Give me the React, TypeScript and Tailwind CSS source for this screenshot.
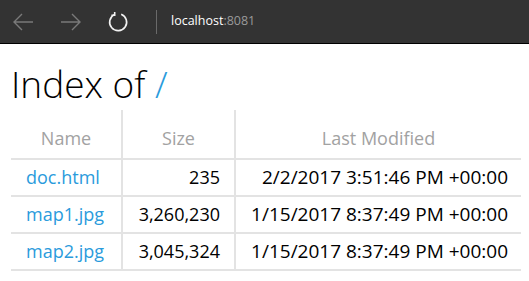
type Entry = { name: string; size: string; modified: string };

const entries: Entry[] = [
  { name: "doc.html", size: "235", modified: "2/2/2017 3:51:46 PM +00:00" },
  { name: "map1.jpg", size: "3,260,230", modified: "1/15/2017 8:37:49 PM +00:00" },
  { name: "map2.jpg", size: "3,045,324", modified: "1/15/2017 8:37:49 PM +00:00" },
];

const Arrow = ({ flip }: { flip?: boolean }) => (
  <svg width="22" height="18" viewBox="0 0 22 18" className={flip ? "-scale-x-100" : ""}>
    <path d="M21 9H2M10 1 2 9l8 8" fill="none" stroke="#7a7a7a" strokeWidth="1.4" />
  </svg>
);

export default function App() {
  return (
    <div className="min-h-screen bg-white font-['Open_Sans',sans-serif]">
      {/* browser chrome */}
      <div className="flex h-[44px] items-center border-b border-black bg-[#333333]">
        <div className="ml-[12px]"><Arrow /></div>
        <div className="ml-[26px]"><Arrow flip /></div>
        <svg width="22" height="22" viewBox="0 0 22 22" className="ml-[25px]">
          <path d="M7.2 3.6A8.5 8.5 0 1 0 14.2 3.2" fill="none" stroke="#f2f2f2" strokeWidth="1.6" />
          <path d="M7.7 1v3.3H4.4" fill="none" stroke="#f2f2f2" strokeWidth="1.6" />
        </svg>
        <div className="ml-[27px] h-[24px] w-px bg-[#6a6a6a]" />
        <div className="ml-[14px] text-[12.5px] text-white">
          localhost<span className="text-[#9a9a9a]">:8081</span>
        </div>
      </div>

      <div className="px-[11px]">
        <h1 className="mt-[17px] text-[37px] leading-[46px] font-light text-black">
          Index of <a className="text-[#2a9bdc]">/</a>
        </h1>
        <table className="mt-[3px] w-[510px] border-collapse text-[18px]">
          <thead>
            <tr className="h-[49px] border-b-2 border-[#e3e3e3] text-[#a2a2a2]">
              <th className="w-[111px] border-r-2 border-[#e3e3e3] pb-[6px] align-bottom font-normal">Name</th>
              <th className="w-[113px] border-r-2 border-[#e3e3e3] pb-[6px] align-bottom font-normal">Size</th>
              <th className="pb-[6px] align-bottom font-normal">Last Modified</th>
            </tr>
          </thead>
          <tbody>
            {entries.map((e) => (
              <tr key={e.name} className="h-[37px] border-b-2 border-[#e3e3e3]">
                <td className="border-r-2 border-[#e3e3e3] pl-[15px] text-[#2a9bdc]">{e.name}</td>
                <td className="border-r-2 border-[#e3e3e3] pr-[14px] text-right text-black">{e.size}</td>
                <td className="pr-[13px] text-right text-[19px] text-black">{e.modified}</td>
              </tr>
            ))}
          </tbody>
        </table>
      </div>
    </div>
  );
}
